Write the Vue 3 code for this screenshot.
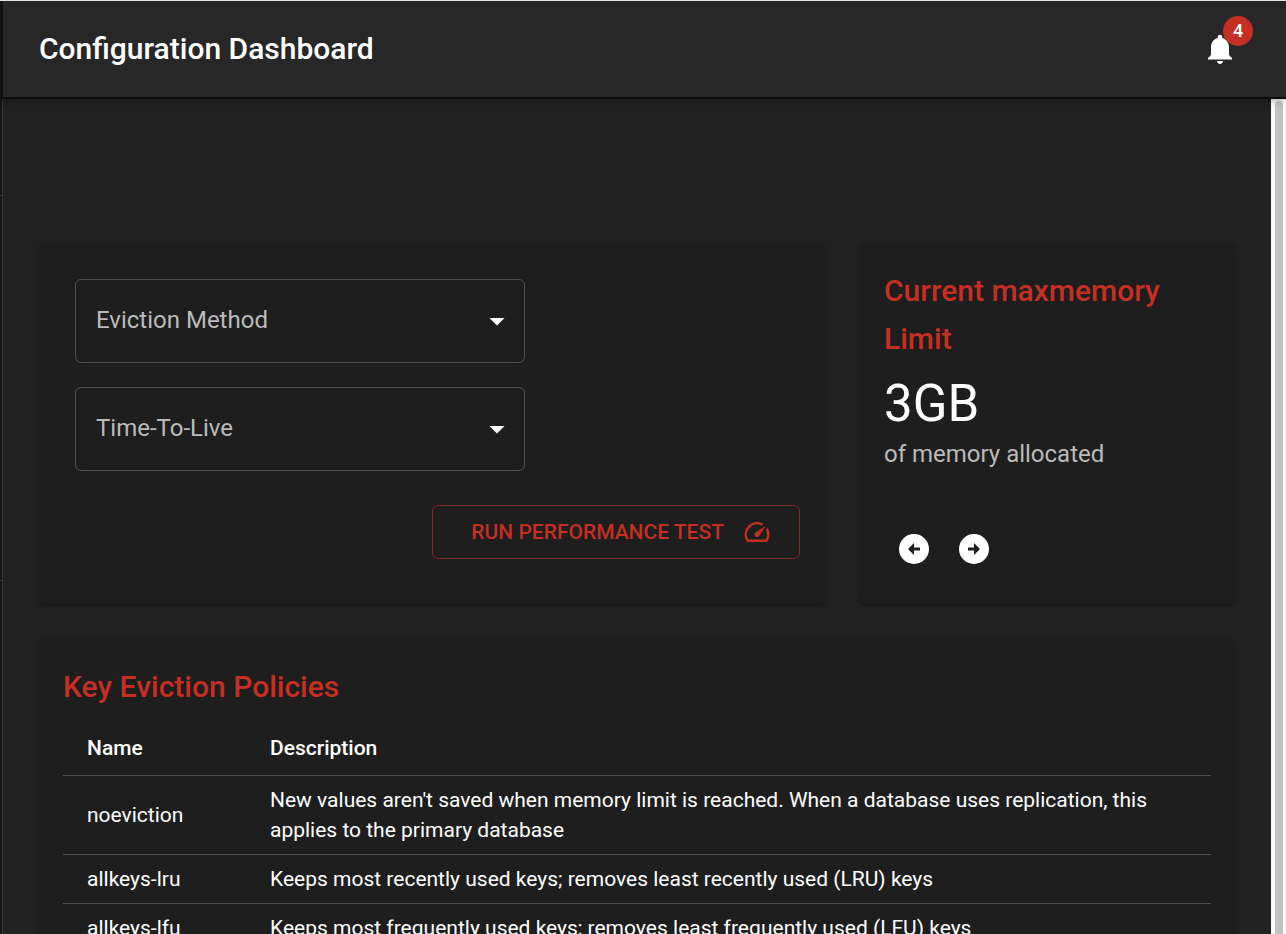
<script setup>
import { ref } from 'vue'

const policies = [
  { name: 'noeviction', text: "New values aren't saved when memory limit is reached. When a database uses replication, this applies to the primary database" },
  { name: 'allkeys-lru', text: 'Keeps most recently used keys; removes least recently used (LRU) keys' },
  { name: 'allkeys-lfu', text: 'Keeps most frequently used keys; removes least frequently used (LFU) keys' }
]
const ttls = ['1 minute', '5 minutes', '1 hour']
const method = ref('')
const ttl = ref('')
</script>

<template>
  <div class="shell">
    <aside class="rail">
      <div class="rail-head"></div>
      <div class="rail-group"></div>
      <div class="rail-group rail-long"></div>
    </aside>
    <div class="page">
      <header class="bar">
        <h1>Configuration Dashboard</h1>
        <button class="bell" type="button" aria-label="Notifications">
          <svg viewBox="0 0 24 24"><path d="M12 22c1.1 0 2-.9 2-2h-4c0 1.1.89 2 2 2zm6-6v-5c0-3.07-1.64-5.64-4.5-6.32V4c0-.83-.67-1.5-1.5-1.5s-1.5.67-1.5 1.5v.68C7.63 5.36 6 7.92 6 11v5l-2 2v1h16v-1l-2-2z" /></svg>
          <span class="badge">4</span>
        </button>
      </header>
      <div class="body">
        <main class="content">
          <section class="card settings">
            <div class="field">
              <select id="method" v-model="method">
                <option value=""></option>
                <option v-for="p in policies" :key="p.name">{{ p.name }}</option>
              </select>
              <label v-if="!method" for="method">Eviction Method</label>
              <svg viewBox="0 0 24 24"><path d="m7 10 5 5 5-5z" /></svg>
            </div>
            <div class="field">
              <select id="ttl" v-model="ttl">
                <option value=""></option>
                <option v-for="t in ttls" :key="t">{{ t }}</option>
              </select>
              <label v-if="!ttl" for="ttl">Time-To-Live</label>
              <svg viewBox="0 0 24 24"><path d="m7 10 5 5 5-5z" /></svg>
            </div>
            <button class="run" type="button">
              RUN PERFORMANCE TEST
              <svg viewBox="0 0 24 24"><path d="m20.38 8.57-1.23 1.85a8 8 0 0 1-.22 7.58H5.07A8 8 0 0 1 15.58 6.85l1.85-1.23A10 10 0 0 0 3.35 19a2 2 0 0 0 1.72 1h13.85a2 2 0 0 0 1.74-1 10 10 0 0 0-.27-10.44zm-9.79 6.84a2 2 0 0 0 2.83 0l5.66-8.49-8.49 5.66a2 2 0 0 0 0 2.83z" /></svg>
            </button>
          </section>
          <section class="card memory">
            <div>
              <h2>Current maxmemory Limit</h2>
              <p class="amount">3GB</p>
              <p class="note">of memory allocated</p>
            </div>
            <div class="steps">
              <button type="button" aria-label="Previous">
                <svg viewBox="0 0 24 24"><path d="M12 2a10 10 0 1 0 0 20 10 10 0 0 0 0-20zm4 11h-4v3l-4-4 4-4v3h4z" /></svg>
              </button>
              <button type="button" aria-label="Next">
                <svg viewBox="0 0 24 24"><path d="M12 2a10 10 0 1 0 0 20 10 10 0 0 0 0-20zm-4 9h4V8l4 4-4 4v-3H8z" /></svg>
              </button>
            </div>
          </section>
          <section class="card policies">
            <h2>Key Eviction Policies</h2>
            <table>
              <thead>
                <tr><th class="name">Name</th><th>Description</th></tr>
              </thead>
              <tbody>
                <tr v-for="p in policies" :key="p.name">
                  <td>{{ p.name }}</td>
                  <td>{{ p.text }}</td>
                </tr>
              </tbody>
            </table>
          </section>
        </main>
        <div class="track"><div class="thumb"></div></div>
      </div>
    </div>
  </div>
</template>

<style>
body {
  margin: 0;
  background: #212121;
}
</style>

<style scoped>
* {
  box-sizing: border-box;
}
.shell {
  display: flex;
  height: 100vh;
  overflow: hidden;
  border-top: 1px solid #dfe5e4;
  background: #212121;
  color: #fff;
  font-family: Roboto, "Liberation Sans", sans-serif;
  font-size: 24px;
  line-height: 36px;
}
h1, h2, p {
  margin: 0;
}
h1, h2 {
  font-size: 30px;
  line-height: 48px;
  font-weight: 500;
}
h2 {
  color: #c62f24;
}
button {
  font: inherit;
  color: inherit;
  background: none;
  border: 0;
  padding: 0;
  cursor: pointer;
}
svg {
  display: block;
  width: 36px;
  height: 36px;
  fill: currentColor;
}
.rail {
  flex: 0 0 3px;
  background: #161616;
  border-right: 1px solid #373737;
}
.rail-head {
  height: 97px;
}
.rail-group {
  height: 98px;
  border-bottom: 1px solid #373737;
}
.rail-long {
  height: 385px;
}
.page {
  flex: 1;
  min-width: 0;
  display: flex;
  flex-direction: column;
}
.bar {
  position: relative;
  z-index: 1;
  flex: none;
  display: flex;
  align-items: center;
  justify-content: space-between;
  height: 96px;
  padding: 0 48px 0 36px;
  background: #272727;
  box-shadow: 0 3px 6px -1px rgba(0, 0, 0, .3), 0 1px 12px rgba(0, 0, 0, .2), 0 0 0 2px #121212;
}
.bell {
  position: relative;
}
.badge {
  position: absolute;
  top: -15px;
  right: -15px;
  width: 30px;
  height: 30px;
  border-radius: 15px;
  background: #c62f24;
  font-size: 18px;
  font-weight: 500;
  line-height: 30px;
  text-align: center;
}
.body {
  flex: 1;
  min-height: 0;
  display: flex;
}
.content {
  flex: 1;
  min-width: 0;
  overflow: hidden;
  display: grid;
  grid-template-columns: repeat(12, minmax(0, 1fr));
  align-content: start;
  gap: 34px;
  padding: 145px 36px 0;
}
.track {
  flex: 0 0 15px;
  padding: 4px 3px 0 4px;
  background: #fafafa;
}
.thumb {
  height: 1000px;
  border-radius: 4px;
  background: #c1c1c1;
}
.card {
  border-radius: 6px;
  background: #1e1e1e;
  box-shadow: 0 2px 2px -1px rgba(0, 0, 0, .3), 0 1px 4px rgba(0, 0, 0, .08);
}
.settings {
  grid-column: span 8;
  display: flex;
  flex-direction: column;
  gap: 24px;
  padding: 37px 25px 45px 36px;
}
.field {
  position: relative;
  display: flex;
  align-items: center;
  width: 450px;
  max-width: 100%;
}
.field select {
  width: 100%;
  height: 84px;
  padding: 0 48px 0 20px;
  appearance: none;
  border: 1px solid #515151;
  border-radius: 6px;
  background: transparent;
  color: #fff;
  font: inherit;
}
.field option {
  background: #1e1e1e;
}
.field label {
  position: absolute;
  top: 23px;
  left: 21px;
  color: #bbb;
  pointer-events: none;
}
.field svg {
  position: absolute;
  right: 10px;
  pointer-events: none;
}
.run {
  align-self: flex-end;
  display: flex;
  align-items: center;
  gap: 18px;
  height: 54px;
  margin-top: 10px;
  padding: 0 27px 0 38px;
  border: 1px solid #7a2a24;
  border-radius: 6px;
  color: #c62f24;
  font-size: 21px;
  font-weight: 500;
}
.run svg {
  width: 30px;
  height: 30px;
}
.memory {
  grid-column: span 4;
  display: flex;
  flex-direction: column;
  justify-content: space-between;
  gap: 24px;
  padding: 25px;
}
.amount {
  margin-top: 9px;
  font-size: 51px;
  line-height: 64px;
}
.note {
  color: #bbb;
}
.steps {
  display: flex;
}
.steps button {
  padding: 12px;
}
.policies {
  grid-column: 1 / -1;
  padding: 25px 24px;
}
table {
  width: 100%;
  margin-top: 9px;
  border-collapse: separate;
  border-spacing: 0;
  font-size: 21px;
  line-height: 30px;
}
th, td {
  padding: 9px 24px;
  border-bottom: 1px solid #515151;
  text-align: left;
}
th {
  padding: 13px 24px 12px;
  font-weight: 500;
}
td:first-child, th:first-child {
  padding-right: 0;
}
.name {
  width: 183px;
}
</style>
